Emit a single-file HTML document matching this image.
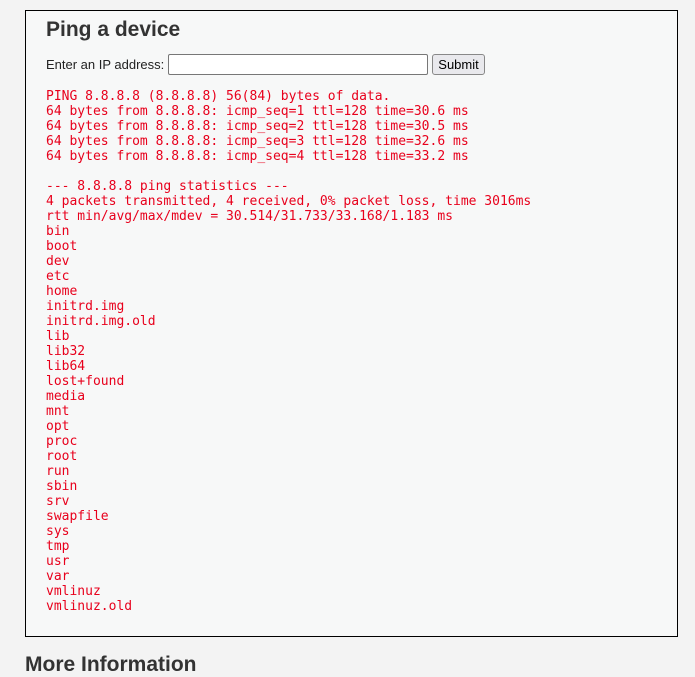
<!DOCTYPE html>
<html><head><style>
html,body{margin:0;padding:0;background:#f3f3f3;width:695px;height:663px;overflow:hidden;font-family:"Liberation Sans",sans-serif;color:#333;}
.box{position:absolute;left:25px;top:10px;width:651px;height:625px;border:1px solid #000;background:#f7f8f8;}
h2{position:absolute;left:20px;top:7px;margin:0;font-size:21px;font-weight:bold;color:#333;}
.form{position:absolute;left:20px;top:43px;font-size:13px;color:#222;display:flex;align-items:center;}
.inp{width:258px;height:19px;border:1px solid #777;border-radius:2px;background:#fff;margin-left:4px;}
.btn{margin-left:4px;height:19px;padding:0 5px;border:1px solid #888;border-radius:3px;background:#e9e9ed;font-size:13px;line-height:19px;color:#000;}
pre{position:absolute;left:20px;top:78px;margin:0;font-family:"DejaVu Sans Mono",monospace;font-size:13px;line-height:15px;color:#e8001c;}
h3{position:absolute;left:25px;top:653px;margin:0;font-size:21px;font-weight:bold;color:#333;}
</style></head><body>
<div class="box">
<h2>Ping a device</h2>
<div class="form">Enter an IP address:<div class="inp"></div><div class="btn">Submit</div></div>
<pre>PING 8.8.8.8 (8.8.8.8) 56(84) bytes of data.
64 bytes from 8.8.8.8: icmp_seq=1 ttl=128 time=30.6 ms
64 bytes from 8.8.8.8: icmp_seq=2 ttl=128 time=30.5 ms
64 bytes from 8.8.8.8: icmp_seq=3 ttl=128 time=32.6 ms
64 bytes from 8.8.8.8: icmp_seq=4 ttl=128 time=33.2 ms

--- 8.8.8.8 ping statistics ---
4 packets transmitted, 4 received, 0% packet loss, time 3016ms
rtt min/avg/max/mdev = 30.514/31.733/33.168/1.183 ms
bin
boot
dev
etc
home
initrd.img
initrd.img.old
lib
lib32
lib64
lost+found
media
mnt
opt
proc
root
run
sbin
srv
swapfile
sys
tmp
usr
var
vmlinuz
vmlinuz.old</pre>
</div>
<h3>More Information</h3>
</body></html>
